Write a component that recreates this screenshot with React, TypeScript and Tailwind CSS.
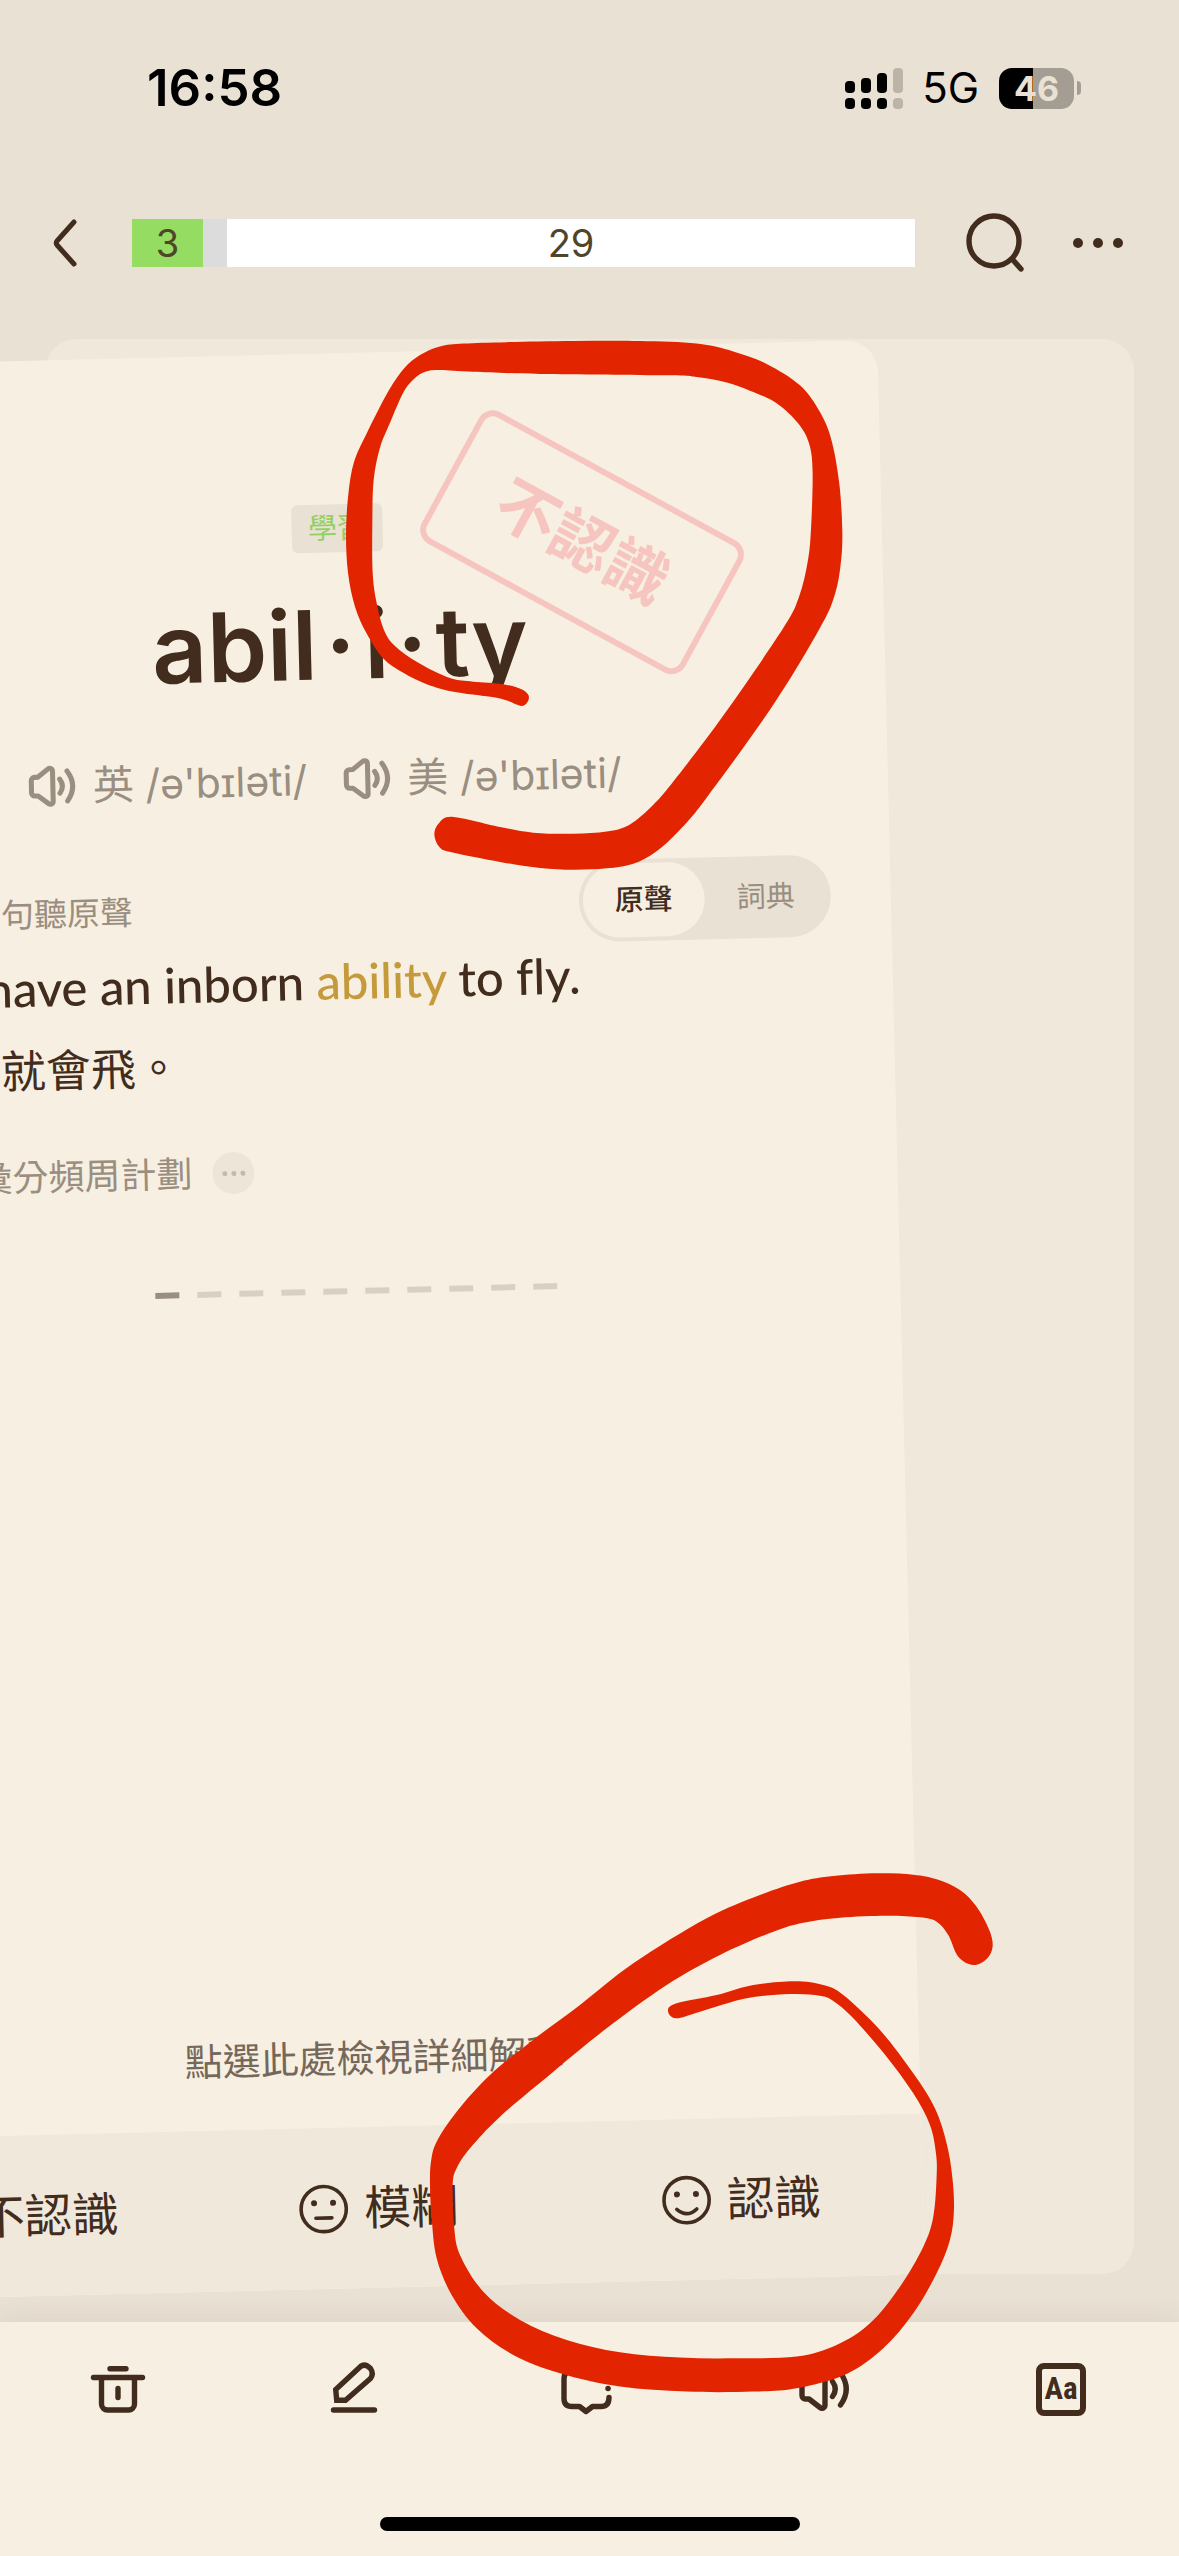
import React, { useState } from 'react';

type Point = [number, number];

interface IconProps {
  className?: string;
}

interface Answer {
  id: string;
  label: string;
  mouth: string;
}

// Respuestas posibles de la tarjeta
const answers: Answer[] = [
  { id: 'unknown', label: '不認識', mouth: 'M17 36q8 -8 16 0' },
  { id: 'fuzzy', label: '模糊', mouth: 'M17 34h16' },
  { id: 'known', label: '認識', mouth: 'M15 34q10 9 20 0' }
];

const phonetics = [
  { region: '英', text: "/ə'bɪləti/" },
  { region: '美', text: "/ə'bɪləti/" }
];

// Contornos de los trazos rojos del marcador
const stampStroke: Point[] = [
  [545, 1053], [567, 1030], [548, 1008], [490, 992], [400, 985], [330, 975], [235, 932], [165, 885], [132, 840],
  [110, 765], [98, 680], [97, 540], [101, 420], [120, 330], [150, 260], [190, 175], [222, 137], [256, 117],
  [300, 112], [400, 117], [600, 123], [980, 127], [1070, 132], [1160, 147], [1230, 170], [1310, 205], [1375, 262],
  [1408, 320], [1418, 400], [1413, 560], [1403, 650], [1378, 745], [1330, 835], [1150, 1080], [1000, 1265],
  [940, 1330], [870, 1385], [800, 1405], [700, 1411], [580, 1408], [480, 1392], [340, 1364], [298, 1380],
  [283, 1412], [298, 1448], [335, 1463], [480, 1490], [600, 1507], [700, 1512], [800, 1508], [880, 1495],
  [950, 1460], [1020, 1400], [1100, 1310], [1300, 1050], [1440, 835], [1485, 740], [1503, 650], [1507, 560],
  [1498, 430], [1475, 310], [1440, 230], [1380, 155], [1280, 95], [1180, 60], [1070, 38], [900, 31], [700, 31],
  [500, 34], [370, 38], [300, 46], [240, 70], [190, 110], [140, 180], [80, 290], [42, 370], [25, 460], [18, 570],
  [24, 680], [45, 775], [80, 850], [130, 920], [190, 960], [260, 992], [350, 1015], [480, 1032]
];

const answerStroke: Point[] = [
  [1660, 270], [1700, 252], [1718, 215], [1708, 165], [1670, 95], [1620, 45], [1550, 13], [1480, -1], [1370, -5],
  [1240, 3], [1140, 20], [1020, 60], [860, 130], [640, 265], [480, 390], [340, 494], [210, 600], [110, 710],
  [50, 800], [33, 860], [30, 930], [35, 1030], [50, 1150], [95, 1260], [170, 1360], [280, 1440], [420, 1495],
  [600, 1535], [800, 1550], [1000, 1550], [1130, 1540], [1280, 1497], [1390, 1420], [1480, 1315], [1550, 1195],
  [1590, 1095], [1602, 1005], [1597, 905], [1580, 805], [1545, 700], [1480, 595], [1380, 465], [1270, 360],
  [1210, 330], [1120, 319], [990, 332], [890, 360], [770, 385], [744, 407], [768, 430], [840, 410], [980, 370],
  [1110, 357], [1200, 362], [1240, 378], [1300, 430], [1400, 545], [1480, 655], [1530, 750], [1548, 835],
  [1550, 905], [1540, 1025], [1510, 1115], [1440, 1235], [1350, 1345], [1250, 1410], [1130, 1445], [960, 1450],
  [780, 1448], [600, 1432], [440, 1395], [300, 1335], [190, 1250], [120, 1140], [102, 1050], [98, 930],
  [110, 880], [150, 820], [240, 725], [400, 590], [560, 460], [740, 330], [900, 240], [1060, 170], [1150, 143],
  [1260, 128], [1400, 122], [1500, 127], [1550, 140], [1585, 180], [1615, 245]
];

// Curva cerrada que pasa por todos los puntos
const closedCurve = (points: Point[]) => {
  const at = (i: number) => points[(i + points.length) % points.length];
  const segments = points.map((p, i) => {
    const prev = at(i - 1);
    const next = at(i + 1);
    const after = at(i + 2);
    return [
      'C',
      p[0] + (next[0] - prev[0]) / 6,
      p[1] + (next[1] - prev[1]) / 6,
      next[0] - (after[0] - p[0]) / 6,
      next[1] - (after[1] - p[1]) / 6,
      next[0],
      next[1]
    ].join(' ');
  });
  return `M${points[0].join(' ')} ${segments.join(' ')}Z`;
};

const Stroke: React.FC<IconProps & { children: React.ReactNode }> = ({ className, children }) => (
  <svg
    viewBox="0 0 60 60"
    className={className}
    fill="none"
    stroke="currentColor"
    strokeWidth="5.4"
    strokeLinecap="round"
    strokeLinejoin="round"
    aria-hidden="true"
  >
    {children}
  </svg>
);

const SpeakerIcon: React.FC<IconProps> = ({ className }) => (
  <Stroke className={className}>
    <path d="M7 23.5a3.5 3.5 0 0 1 3.5-3.5H14l11-8.5c2-1.5 5-.5 5 2.5V46c0 3-3 4-5 2.5L14 40h-3.5A3.5 3.5 0 0 1 7 36.5z" />
    <path d="M37.5 22.5q5.5 7.5 0 15M45.5 14q11.5 16 0 32" />
  </Stroke>
);

const TrashIcon: React.FC<IconProps> = ({ className }) => (
  <Stroke className={className}>
    <path d="M22 9.7h16M5.5 18.5h49M13.5 18.5V45a6 6 0 0 0 6 6h21a6 6 0 0 0 6-6V18.5M30 29.5v9" />
  </Stroke>
);

const PencilIcon: React.FC<IconProps> = ({ className }) => (
  <Stroke className={className}>
    <path strokeLinejoin="miter" d="M12.7 41.3L11.7 30.5L36.5 7.5Q41 4 46.5 9.5Q50 14.5 46.5 19.5L21.5 41.3Z" />
    <path d="M9.5 51h41" />
  </Stroke>
);

const NoteIcon: React.FC<IconProps> = ({ className }) => (
  <Stroke className={className}>
    <path d="M50 38.5q0 9-8 9h-8.5L27 52.5L20.5 47.5H13q-8 0-8-8V20q0-8 8-8h20" />
    <path d="M49 29.5h.1" />
  </Stroke>
);

const SignalIcon: React.FC<IconProps> = ({ className }) => (
  <svg viewBox="0 0 58 41" className={className} aria-hidden="true">
    <rect x="0" y="13" width="10" height="12" rx="4" />
    <rect x="16" y="10" width="10" height="15" rx="4" />
    <rect x="32" y="5" width="10" height="20" rx="4" />
    <rect x="48" y="0" width="10" height="25" rx="4" opacity=".2" />
    <rect x="0" y="30" width="10" height="11" rx="4" />
    <rect x="16" y="30" width="10" height="11" rx="4" />
    <rect x="32" y="30" width="10" height="11" rx="4" />
    <rect x="48" y="30" width="10" height="11" rx="4" opacity=".2" />
  </svg>
);

const StatusBar: React.FC = () => (
  <div className="flex items-center justify-between h-[60px] mt-[58px] pl-[147px] pr-[98px] text-black">
    <span className="text-[51px] leading-[60px] font-semibold">16:58</span>
    <div className="flex items-center">
      <SignalIcon className="w-[58px] h-[41px]" />
      <span className="ml-[19px] text-[42px] leading-[60px]">5G</span>
      <div className="ml-5 w-[75px] h-[41px] rounded-[13px] bg-linear-to-r from-black from-46% to-[#a39d93] to-46% flex items-center justify-center text-[34px] leading-[41px] font-bold text-[#e9e1d4]">
        46
      </div>
      <div className="ml-[3px] w-1 h-[14px] rounded-r-full bg-[#a39d93]" />
    </div>
  </div>
);

const Header: React.FC = () => (
  <header className="flex items-center h-[72px] mt-[89px] pl-12 pr-[53px]">
    <button type="button" aria-label="返回" className="w-[32px] h-[56px]">
      <svg viewBox="0 0 32 56" className="w-full h-full" fill="none" stroke="currentColor" strokeWidth="5" strokeLinecap="round" strokeLinejoin="round">
        <path d="M26 7L9 26q-1.5 2 0 4L26 49" />
      </svg>
    </button>
    <div className="ml-[52px] flex-1 flex h-12 text-[38px] leading-[48px] text-center text-[#4f4528]">
      <div className="w-[71px] bg-[#94dc62]">3</div>
      <div className="w-6 bg-[#dcdcdc]" />
      <div className="flex-1 bg-white">29</div>
    </div>
    <button type="button" aria-label="搜尋" className="ml-[48px] w-[64px] h-[64px]">
      <svg viewBox="0 0 64 64" className="w-full h-full" fill="none" stroke="currentColor" strokeWidth="5.4" strokeLinecap="round">
        <circle cx="31" cy="30" r="25" />
        <path d="M50 49l8 9" />
      </svg>
    </button>
    <button type="button" aria-label="更多" className="ml-[43px] w-[56px] h-[56px] flex items-center justify-center gap-[10px]">
      <span className="size-[10px] rounded-full bg-current" />
      <span className="size-[10px] rounded-full bg-current" />
      <span className="size-[10px] rounded-full bg-current" />
    </button>
  </header>
);

const WordCard: React.FC = () => {
  const [source, setSource] = useState('原聲');

  return (
    <article className="[grid-area:1/1] relative flex flex-col rounded-[32px] overflow-hidden bg-[#f7f0e2] -translate-x-[233px] translate-y-[14px] -rotate-[1.4deg]">
      <div className="self-center mt-[151px] h-12 px-4 rounded-md bg-[#e9e1d4] text-[29px] leading-[48px] text-[#94cf62]">
        學習
      </div>
      <h1 className="mt-8 text-center text-[96px] leading-[120px] font-semibold">
        abil<span className="mx-2">·</span>i<span className="mx-2">·</span>ty
      </h1>

      <div className="mt-[47px] pr-10 h-14 flex items-center justify-center gap-8 text-[41px] leading-[56px] text-[#9a8e80]">
        {phonetics.map(item => (
          <button key={item.region} type="button" className="flex items-center gap-3">
            <SpeakerIcon className="size-14" />
            <span>{item.region} {item.text}</span>
          </button>
        ))}
      </div>

      <div className="mt-[59px] px-[60px] flex items-center justify-between">
        <p className="flex items-center gap-2 text-[33px] leading-[48px] text-[#9a8e80]">
          <SpeakerIcon className="size-8" />
          點選例句聽原聲
        </p>
        <div className="flex p-1 rounded-full bg-[#e9e1d4]">
          {['原聲', '詞典'].map(name => (
            <button
              key={name}
              type="button"
              onClick={() => setSource(name)}
              className={
                source === name
                  ? 'w-[122px] h-[74px] rounded-full bg-[#f7f0e2] text-[29px] font-medium'
                  : 'w-[122px] h-[74px] rounded-full text-[29px] text-[#9a8e80]'
              }
            >
              {name}
            </button>
          ))}
        </div>
      </div>

      <p className="px-[60px] text-[49px] leading-[64px] font-medium font-['Lato','Noto_Sans_CJK_TC',sans-serif] [font-variant-ligatures:none]">
        Birds have an inborn <span className="text-[#c49a3a]">ability</span> to fly.
      </p>
      <p className="mt-5 px-[60px] text-[45px] leading-[64px]">鳥天生就會飛。</p>

      <div className="mt-[50px] px-[60px] h-12 flex items-center gap-5 text-[36px] leading-[48px] text-[#9a8e80]">
        <span>英文詞彙分頻周計劃</span>
        <button type="button" aria-label="更多來源" className="size-[42px] rounded-full bg-[#ede5d8] flex items-center justify-center gap-1">
          <span className="size-[5px] rounded-full bg-[#c4baac]" />
          <span className="size-[5px] rounded-full bg-[#c4baac]" />
          <span className="size-[5px] rounded-full bg-[#c4baac]" />
        </button>
      </div>

      <div className="mt-[94px] flex justify-center gap-[18px]">
        {Array.from({ length: 10 }, (_, i) => (
          <span key={i} className={i === 0 ? 'w-6 h-[6px] bg-[#9a8e80]' : 'w-6 h-[6px] bg-[#d9d0c2]'} />
        ))}
      </div>

      <p className="mt-auto mb-[45px] pt-12 text-center text-[38px] leading-[48px] text-[#75685a]">點選此處檢視詳細解釋</p>

      <div className="grid grid-cols-3 h-[161px] bg-[#f0e9db]">
        {answers.map(answer => (
          <button key={answer.id} type="button" className="flex items-center justify-center gap-4 text-[47px] leading-[64px]">
            <svg viewBox="0 0 50 50" className="size-[50px]" fill="none" stroke="currentColor" strokeWidth="3.6" strokeLinecap="round" aria-hidden="true">
              <circle cx="25" cy="25" r="22.6" />
              <circle cx="15.5" cy="19" r="3" fill="currentColor" stroke="none" />
              <circle cx="34.5" cy="19" r="3" fill="currentColor" stroke="none" />
              <path d={answer.mouth} />
            </svg>
            {answer.label}
          </button>
        ))}
      </div>

      {/* Sello de la respuesta elegida */}
      <div className="absolute right-[150px] top-[120px] w-[300px] h-[150px] rounded-2xl border-[6px] border-[#f7c5bf] rotate-30 flex items-center justify-center text-[62px] leading-[64px] font-bold text-[#f7c5bf]">
        不認識
      </div>
    </article>
  );
};

const Toolbar: React.FC = () => (
  <footer className="bg-[#f7f0e2] shadow-[0_-4px_24px_rgba(90,60,30,0.08)]">
    <nav className="grid grid-cols-5 h-[134px] justify-items-center items-center">
      <button type="button" aria-label="刪除"><TrashIcon className="size-[60px]" /></button>
      <button type="button" aria-label="編輯"><PencilIcon className="size-[60px]" /></button>
      <button type="button" aria-label="筆記"><NoteIcon className="size-[60px]" /></button>
      <button type="button" aria-label="發音"><SpeakerIcon className="size-[60px]" /></button>
      <button
        type="button"
        className="w-[50px] h-[53px] rounded-lg border-[6px] border-current flex items-center justify-center text-[31px] leading-[32px] font-bold font-['Liberation_Sans_Narrow','Roboto_Condensed','Roboto',sans-serif]"
      >
        Aa
      </button>
    </nav>
    <div className="mx-auto mt-[61px] mb-[25px] w-[420px] h-[14px] rounded-full bg-black" />
  </footer>
);

const Scribbles: React.FC = () => (
  <svg viewBox="0 0 1179 2556" className="absolute top-0 left-0 w-full pointer-events-none" fill="#e22500" aria-hidden="true">
    <path transform="translate(340 330) scale(.3333 .357)" d={closedCurve(stampStroke)} />
    <path transform="translate(420 1875) scale(.3333)" d={closedCurve(answerStroke)} />
  </svg>
);

const App: React.FC = () => {
  return (
    <div className="relative min-h-screen flex flex-col overflow-hidden bg-[#e9e1d4] text-[#412c1d] font-['Inter','Noto_Sans_CJK_TC',sans-serif]">
      <StatusBar />
      <Header />
      <main className="flex-1 grid mt-[60px] mb-12 px-[45px]">
        <div className="[grid-area:1/1] rounded-[32px] bg-[#f0e9db]" />
        <WordCard />
      </main>
      <Toolbar />
      <Scribbles />
    </div>
  );
};

export default App;
